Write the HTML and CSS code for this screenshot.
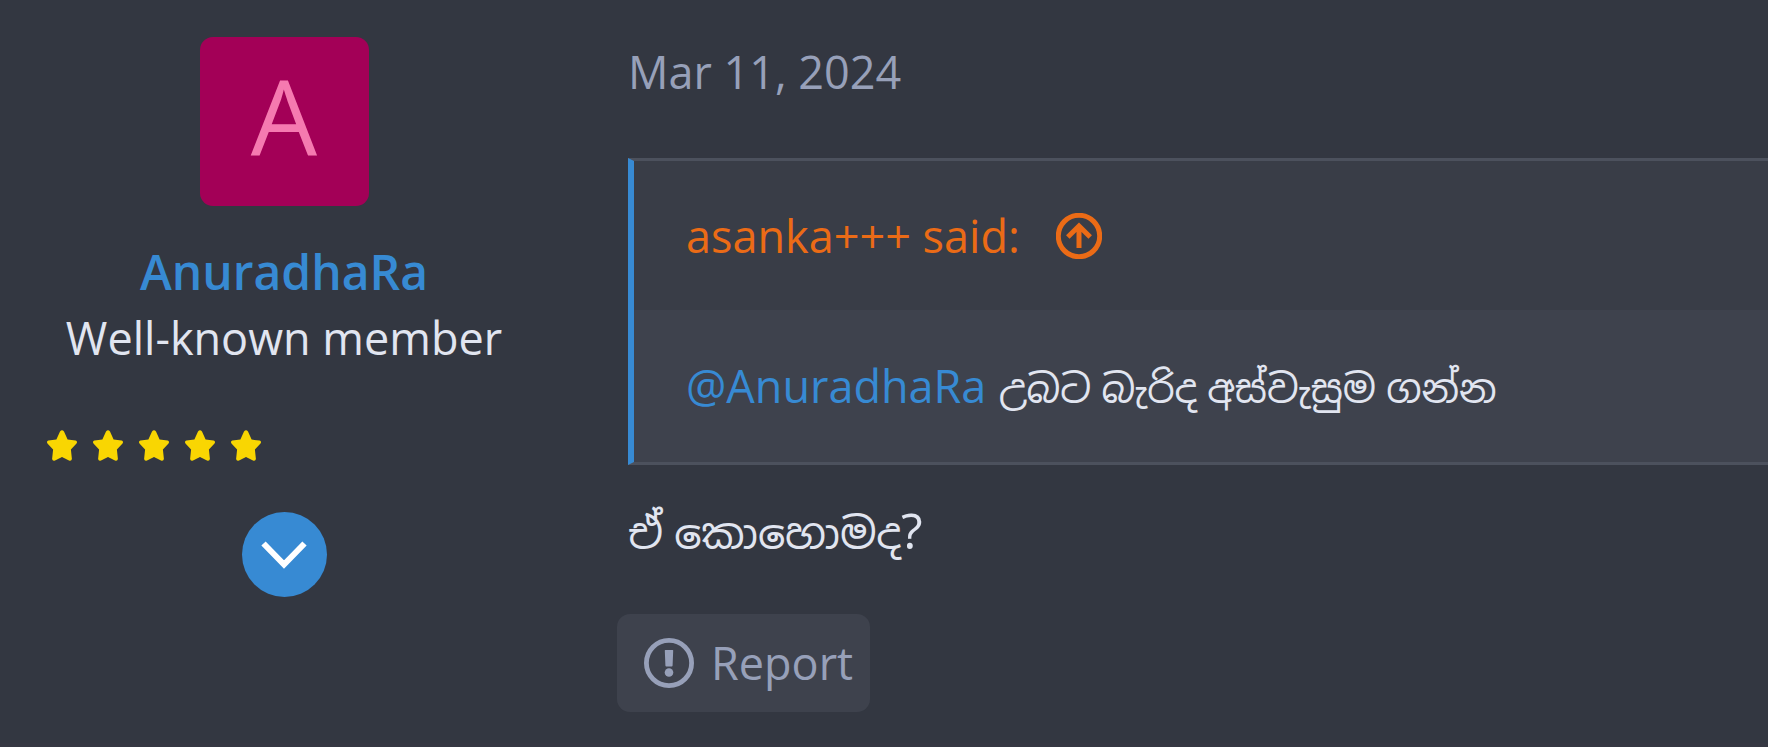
FILE: index.html
```html
<!DOCTYPE html>
<html lang="si">
<head>
<meta charset="utf-8">
<meta name="viewport" content="width=device-width, initial-scale=1">
<title>Forum post</title>
<link rel="stylesheet" href="styles.css">
</head>
<body>
<svg class="sprite" aria-hidden="true">
  <symbol id="star" viewBox="0 0 30 31">
    <path d="M13 1.600Q15 -1 17 1.600L20.600 9.600L28.600 10.600Q31 11.500 29.300 13.800L23.900 19.400L24.900 29Q24.400 31.300 22 30.400L15 26.900L8 30.400Q5.600 31.300 5.100 29L6.100 19.400L.7 13.800Q-1 11.500 1.400 10.600L9.400 9.600Z"/>
  </symbol>
</svg>
<article class="post">
  <aside class="author">
    <a class="avatar" href="#profile">A</a>
    <h1 class="name"><a href="#profile">AnuradhaRa</a></h1>
    <p class="rank">Well-known member</p>
    <div class="stars" role="img" aria-label="5 stars">
      <svg><use href="#star"/></svg>
      <svg><use href="#star"/></svg>
      <svg><use href="#star"/></svg>
      <svg><use href="#star"/></svg>
      <svg><use href="#star"/></svg>
    </div>
    <button class="expand" type="button" aria-label="Show details">
      <svg viewBox="0 0 46 28"><path d="M2.500 2.500L23 23.500L43.500 2.500"/></svg>
    </button>
  </aside>
  <div class="main">
    <a class="date" href="#post"><time datetime="2024-03-11">Mar 11, 2024</time></a>
    <blockquote class="quote">
      <a class="source" href="#source"><span>asanka+++ said:</span>
        <svg viewBox="0 0 46 46"><circle cx="23" cy="23" r="20.700"/><path d="M11.800 24L23 13L34.200 24M23 13.500V35"/></svg>
      </a>
      <p class="quoted"><a href="#profile">@AnuradhaRa</a> <span class="sinhala">උබට බැරිද අස්වැසුම ගන්න</span></p>
    </blockquote>
    <p class="message"><span class="sinhala">ඒ කොහොමද</span>?</p>
    <button class="report" type="button">
      <svg viewBox="0 0 50 50"><circle cx="25" cy="25" r="22.600"/><path d="M20.800 12.500Q20.800 12 21.300 12H28.700Q29.200 12 29.200 12.500L28.600 27.500Q28.600 28.500 27.600 28.500H22.400Q21.400 28.500 21.400 27.500Z"/><circle class="dot" cx="25" cy="34.500" r="4.300"/></svg>
      <span>Report</span>
    </button>
  </div>
</article>
</body>
</html>
```
FILE: styles.css
```css
* { box-sizing: border-box; }

body {
  margin: 0;
  min-height: 100vh;
  background: #333741;
  color: #e1e5f0;
  font-family: "Open Sans", "Noto Sans", "Noto Sans Sinhala", sans-serif;
  font-size: 45px;
  line-height: 64px;
}

a { color: #378ad3; text-decoration: none; }
h1, p, blockquote { margin: 0; }

button {
  border: 0;
  font: inherit;
  color: inherit;
  cursor: pointer;
}

.sprite { position: absolute; width: 0; height: 0; }

.post {
  display: grid;
  grid-template-columns: 568px 1fr;
  min-height: 100vh;
  border-bottom: 4px solid #353742;
}

.author {
  display: flex;
  flex-direction: column;
  align-items: center;
  padding: 37px 0 0;
}

.avatar {
  display: flex;
  align-items: center;
  justify-content: center;
  width: 169px;
  height: 169px;
  padding-bottom: 12px;
  border-radius: 13px;
  background: #a30057;
  color: #f57ab0;
  font-size: 105px;
}

.name {
  margin-top: 34px;
  font-size: 48px;
  font-weight: 600;
}

.rank {
  margin-top: 2px;
  white-space: nowrap;
}

.stars {
  display: flex;
  align-self: flex-start;
  gap: 16px;
  margin: 60px 0 51px 47px;
  fill: #f9d602;
}

.stars svg { width: 30px; height: 31px; }

.expand {
  display: flex;
  align-items: center;
  justify-content: center;
  width: 85px;
  height: 85px;
  padding: 0;
  border-radius: 50%;
  background: #378ad3;
}

.expand svg {
  width: 46px;
  height: 28px;
  fill: none;
  stroke: #fff;
  stroke-width: 6;
}

.main {
  display: flex;
  flex-direction: column;
  align-items: flex-start;
  padding: 40px 0 30px 60px;
}

.date { color: #97a0b9; }

.quote {
  align-self: stretch;
  margin-top: 54px;
  border: solid #4c515d;
  border-width: 3px 0;
  border-left: 6px solid #378ad3;
  background: #3e424d;
}

.source {
  display: flex;
  align-items: center;
  gap: 36px;
  padding: 43px 52px 42px;
  background: #393d47;
  color: #eb6b16;
}

.source svg {
  width: 46px;
  height: 46px;
  fill: none;
  stroke: currentColor;
  stroke-width: 5;
}

.quoted { padding: 44px 52px; }

.sinhala { line-height: 1; }

.quoted .sinhala {
  margin-left: 1px;
  font-size: 39px;
}

.message {
  margin-top: 33px;
  font-size: 50px;
}

.message .sinhala { font-size: 43px; }

.report {
  display: flex;
  align-items: center;
  gap: 17px;
  margin: 52px 0 0 -11px;
  padding: 17px 17px 17px 27px;
  border-radius: 13px;
  background: #3e424d;
  color: #97a0b9;
}

.report svg {
  width: 50px;
  height: 50px;
  fill: currentColor;
}

.report circle {
  fill: none;
  stroke: currentColor;
  stroke-width: 4.800;
}

.report .dot { fill: currentColor; stroke: none; }
```
